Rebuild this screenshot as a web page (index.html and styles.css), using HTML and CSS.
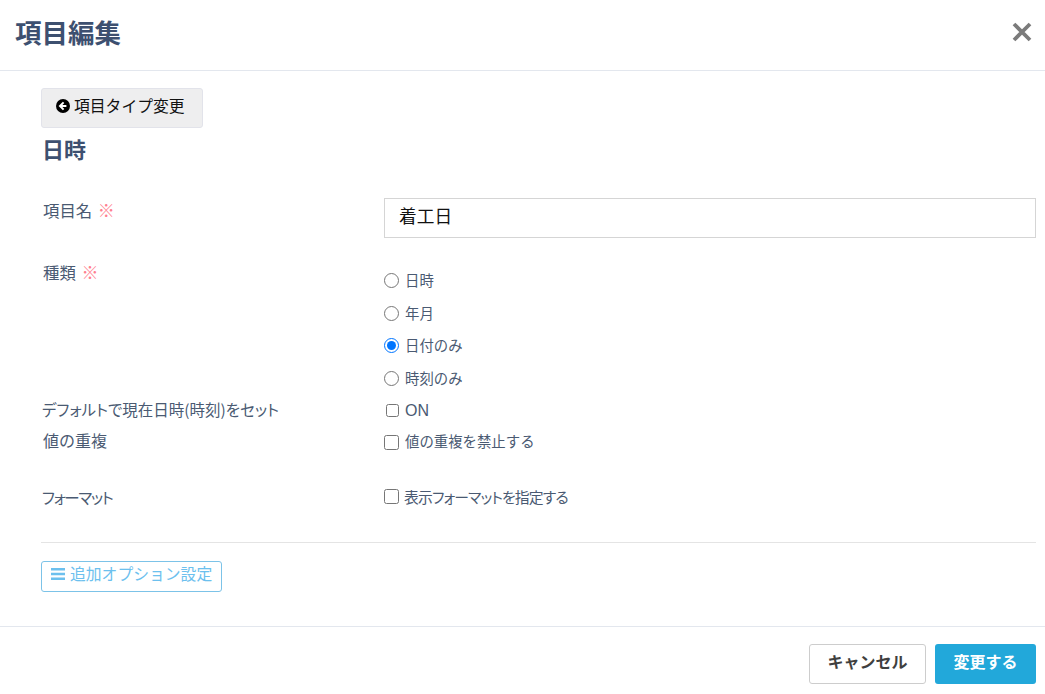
FILE: index.html
```html
<!DOCTYPE html>
<html lang="ja">
<head>
<meta charset="utf-8">
<title>項目編集</title>
<link rel="stylesheet" href="styles.css">
</head>
<body>
<div class="modal">
  <header class="modal-header">
    <h1 class="modal-title">項目編集</h1>
    <svg class="close-icon" viewBox="0 0 20 20" width="20" height="20" aria-label="閉じる"><path d="M2 2L18 18M18 2L2 18"/></svg>
  </header>
  <main class="modal-body">
    <button class="back-btn" type="button">
      <svg class="back-icon" viewBox="0 0 14 14" width="14" height="14"><circle cx="7" cy="7" r="7"/><path d="M7.6 3.4L4 7l3.6 3.6M4.4 7h6" /></svg>
      <span>項目タイプ変更</span>
    </button>
    <h2 class="type-name">日時</h2>
    <div class="row row-name">
      <div class="label">項目名 <span class="req">※</span></div>
      <input class="text-input" type="text" value="着工日">
    </div>
    <div class="row row-kind">
      <div class="label">種類 <span class="req">※</span></div>
      <div class="radios">
        <label class="opt"><input type="radio" name="k"><span>日時</span></label>
        <label class="opt"><input type="radio" name="k"><span>年月</span></label>
        <label class="opt"><input type="radio" name="k" checked><span>日付のみ</span></label>
        <label class="opt"><input type="radio" name="k"><span>時刻のみ</span></label>
      </div>
    </div>
    <div class="row row-default">
      <div class="label label-tight">デフォルトで現在日時(時刻)をセット</div>
      <label class="opt opt-on"><input class="chk-small" type="checkbox"><span>ON</span></label>
    </div>
    <div class="row row-dup">
      <div class="label">値の重複</div>
      <label class="opt"><input type="checkbox"><span>値の重複を禁止する</span></label>
    </div>
    <div class="row row-format">
      <div class="label label-tight label-format">フォーマット</div>
      <label class="opt opt-fmt"><input type="checkbox"><span>表示フォーマットを指定する</span></label>
    </div>
    <hr class="divider">
    <button class="option-btn" type="button">
      <svg viewBox="0 0 14 12" width="14" height="12"><path d="M0 0h14v2.6H0zM0 4.7h14v2.6H0zM0 9.4h14V12H0z"/></svg>
      <span>追加オプション設定</span>
    </button>
  </main>
  <footer class="modal-footer">
    <button class="btn btn-cancel" type="button">キャンセル</button>
    <button class="btn btn-save" type="button">変更する</button>
  </footer>
</div>
</body>
</html>
```
FILE: styles.css
```css
* { box-sizing: border-box; }
html, body { margin: 0; padding: 0; background: #fff; }
body {
  width: 1045px;
  height: 694px;
  overflow: hidden;
  font-family: "Noto Sans CJK JP", "Noto Sans", sans-serif;
  color: #44546a;
}
.modal { display: flex; flex-direction: column; height: 694px; }
.modal-header {
  height: 71px;
  border-bottom: 1px solid #e3e7ee;
  display: flex;
  align-items: center;
  justify-content: space-between;
  padding: 0 13px 6px 15px;
  flex: none;
}
.modal-title { margin: 0; font-size: 26.5px; line-height: 36px; font-weight: 700; color: #3d5070; }
.close-icon { fill: none; stroke: #7b7b7b; stroke-width: 3.8; }
.modal-body { height: 555px; padding: 17px 9px 0 41px; flex: none; }
.back-btn {
  display: flex;
  align-items: center;
  gap: 4px;
  width: 162px;
  height: 40px;
  padding: 0 0 5px 14px;
  border: 1px solid #e2e3ea;
  border-radius: 3px;
  background: #eeeeef;
  color: #111;
  font: 400 15.8px/20px "Noto Sans CJK JP", sans-serif;
}
.back-icon { fill: #000; stroke: none; flex: none; }
.back-icon path { fill: none; stroke: #fff; stroke-width: 2; }
.type-name { margin: 4px 0 0 1px; font-size: 22px; line-height: 32px; font-weight: 700; color: #3d5070; }
.row { display: grid; grid-template-columns: 343px 652px; align-items: start; }
.label { padding-left: 2px; font-size: 16.4px; line-height: 22px; color: #4a5a72; }
.label-tight { margin-top: -2px; padding-left: 1px; font-size: 15.5px; font-feature-settings: "palt"; }
.label-format { margin-top: -1px; letter-spacing: -1.3px; }
.req { margin-left: 2px; font-size: 17px; color: #ff7f8f; }
.row-name { margin-top: 34px; }
.row-name .label { padding-top: 1px; }
.text-input {
  width: 652px;
  height: 40px;
  padding: 0 14px 6px;
  border: 1px solid #d5d5d5;
  font: 400 17.7px/24px "Noto Sans CJK JP", sans-serif;
  color: #111;
  background: #fff;
  outline: 0;
  border-radius: 0;
}
.row-kind { margin-top: 25px; }
.row-kind .label { margin-top: -2px; }
.radios { display: flex; flex-direction: column; gap: 10.5px; padding-top: 6px; }
.opt { display: flex; align-items: center; gap: 6px; height: 22px; font-size: 14.4px; line-height: 22px; color: #4a5a72; }
.opt input { margin: 0; width: 15px; height: 15px; flex: none; }
.radios .opt input { margin-top: 1px; }
.opt .chk-small { width: 13px; height: 13px; margin-left: 2px; }
.row-default { margin-top: 11px; }
.opt-on { font-size: 16px; gap: 6px; font-family: "Liberation Sans", sans-serif; }
.row-dup { margin-top: 8px; }
.row-dup .label { margin-top: -1px; font-size: 16px; }
.row-dup .opt input { margin-top: 3px; }
.opt-fmt { margin-top: -1px; gap: 5px; font-feature-settings: "palt"; font-size: 14.8px; letter-spacing: -.8px; }
.row-format { margin-top: 35px; }
.divider { margin: 34px 0 0; height: 1px; border: 0; background: #e4e4e4; }
.option-btn {
  display: flex;
  align-items: center;
  gap: 5px;
  margin-top: 18px;
  width: 181px;
  height: 31px;
  padding: 0 0 4px 9px;
  border: 1px solid #7cc3e8;
  border-radius: 3px;
  background: #fff;
  color: #6cc0ee;
  font: 400 15.8px/20px "Noto Sans CJK JP", sans-serif;
}
.option-btn svg { fill: #6cc0ee; flex: none; }
.modal-footer {
  flex: 1;
  border-top: 1px solid #e3e7ee;
  display: flex;
  justify-content: flex-end;
  gap: 9px;
  padding: 17px 9px 0 0;
}
.btn { height: 40px; border-radius: 3px; padding: 0 0 7px; font: 700 16px/22px "Noto Sans CJK JP", sans-serif; }
.btn-cancel { width: 117px; border: 1px solid #cdcdcd; background: #fff; color: #3f3f3f; }
.btn-save { width: 101px; border: 0; background: #22a8da; color: #fff; }
```
